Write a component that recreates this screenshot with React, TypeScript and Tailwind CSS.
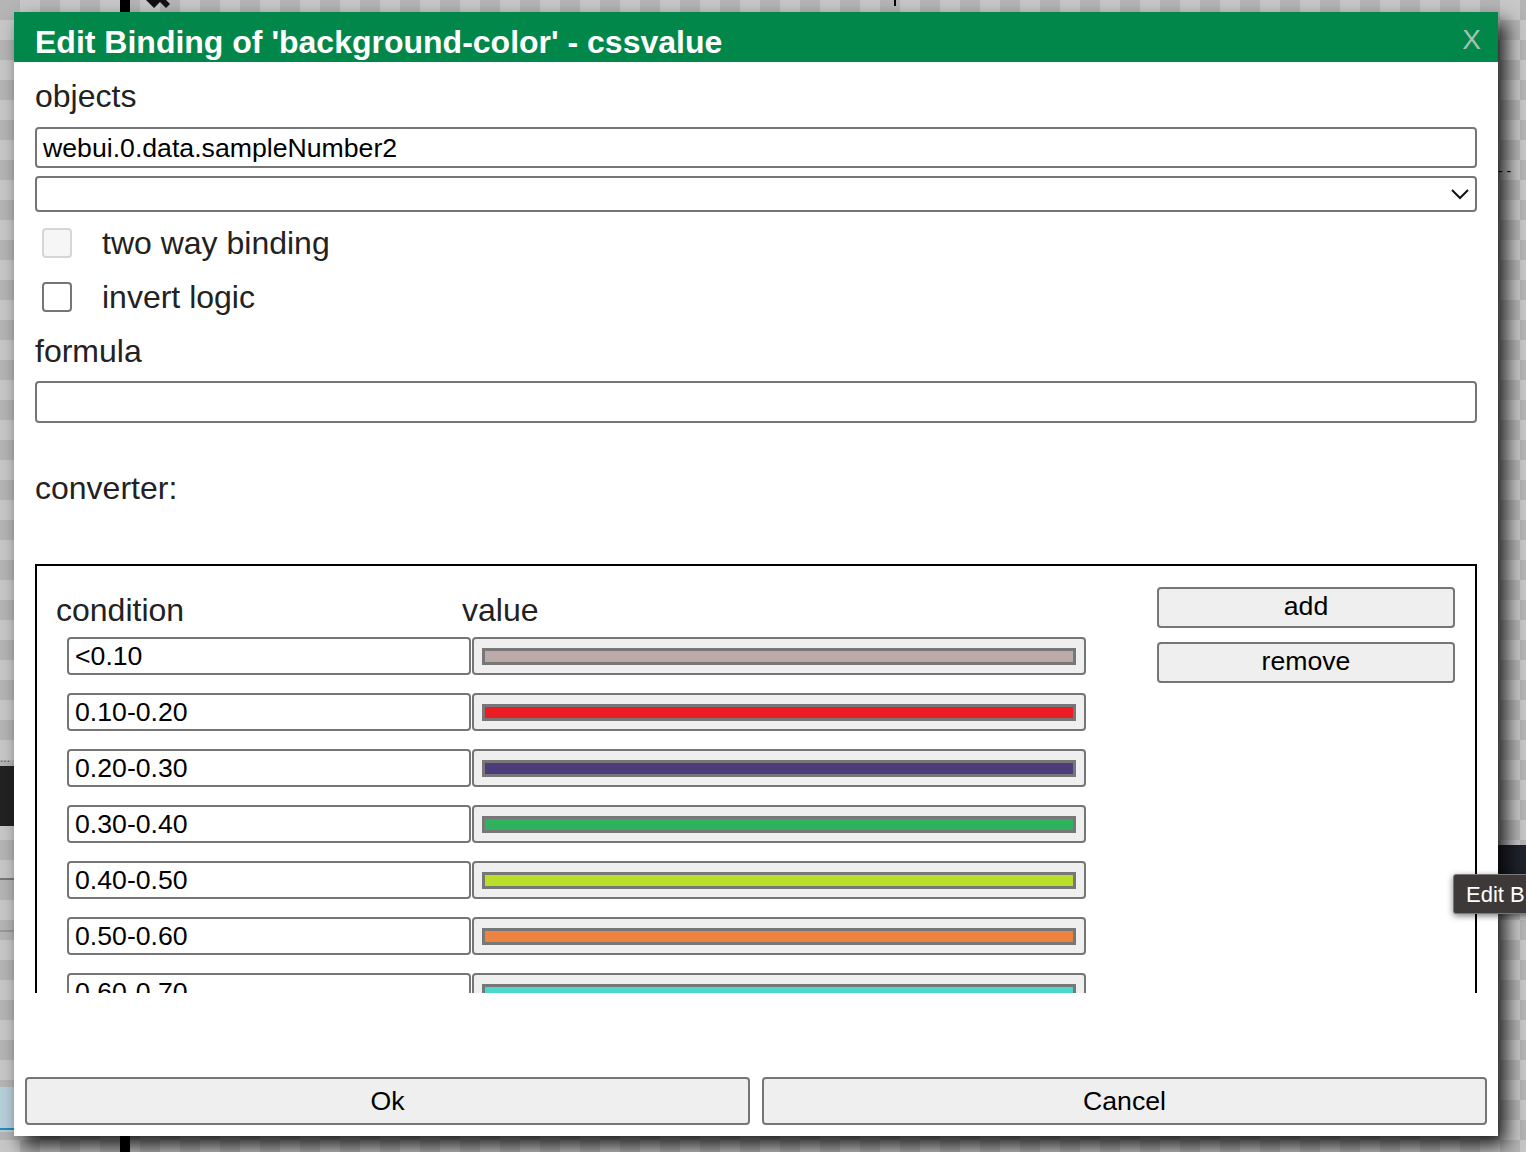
import React from 'react'

const rows = [
  { cond: '<0.10', color: 'bg-[#bcaaa8]' },
  { cond: '0.10-0.20', color: 'bg-[#ec1c24]' },
  { cond: '0.20-0.30', color: 'bg-[#4c3c7c]' },
  { cond: '0.30-0.40', color: 'bg-[#2fb25e]' },
  { cond: '0.40-0.50', color: 'bg-[#b9df2b]' },
  { cond: '0.50-0.60', color: 'bg-[#ee8240]' },
  { cond: '0.60-0.70', color: 'bg-[#4bd8cc]' },
]

function ConverterRow({ cond, color }: { cond: string; color: string }) {
  return (
    <div className="flex h-[38px] ml-[11px]">
      <div className="w-[404px] h-full border-2 border-[#767676] rounded-[4px] bg-white pl-[6px] flex items-center text-[26.67px] text-black">
        {cond}
      </div>
      <div className="w-[614px] h-full border-2 border-[#767676] rounded-[4px] bg-[#efefef] ml-[1px] px-[8px] flex items-center">
        <div className={`w-full h-[17px] border-[3px] border-[#777] ${color}`} />
      </div>
    </div>
  )
}

export default function App() {
  return (
    <div
      className="relative w-[1526px] h-[1152px] overflow-hidden bg-[repeating-conic-gradient(#c8c8c8_0_25%,#b5b5b5_0_50%)] bg-[length:40px_40px]"
      style={{ fontFamily: '"Liberation Sans", Arial, sans-serif' }}
    >
      {/* stuff from the app behind the dialog */}
      <div className="absolute left-[120px] top-0 w-[10px] h-[12px] bg-black" />
      <svg className="absolute left-[140px] top-0" width="40" height="12" viewBox="0 0 40 12">
        <path d="M6 0 L14 8 L20 2 L26 8 L30 4 L24 -2 Z" fill="#111" />
      </svg>
      <div className="absolute left-[894px] top-0 w-[2px] h-[6px] bg-black" />
      <div className="absolute left-0 top-[752px] w-[14px] text-[12px] leading-none text-[#555]">...</div>
      <div className="absolute left-0 top-[766px] w-[14px] h-[60px] bg-[#222]" />
      <div className="absolute left-0 top-[878px] w-[14px] h-[2px] bg-[#777]" />
      <div className="absolute left-0 top-[930px] w-[14px] h-[2px] bg-[#999]" />
      <div className="absolute left-0 top-[1087px] w-[14px] h-[45px] bg-[#b8d0dc]" />
      <div className="absolute left-0 top-[1128px] w-[130px] h-[2px] bg-[#2a8ab8]" />
      <div className="absolute left-[120px] top-[1130px] w-[10px] h-[22px] bg-black" />
      <div className="absolute left-[1498px] top-[845px] w-[28px] h-[60px] bg-[#1e222a]" />
      <div className="absolute left-[1498px] top-[164px] w-[28px] text-[14px] leading-none text-black">- -</div>

      {/* dialog */}
      <div className="absolute left-[14px] top-[12px] w-[1484px] h-[1124px] bg-white flex flex-col shadow-[8px_10px_18px_rgba(0,0,0,0.85)] text-[#222]">
        <div className="h-[50px] bg-[#02874a] flex items-center justify-between pl-[21px] pr-[17px] shrink-0">
          <span className="text-white font-bold text-[32px] leading-none pt-[10px]">Edit Binding of 'background-color' - cssvalue</span>
          <span className="text-[#a8bfb2] text-[28px] leading-none pt-[6px]">X</span>
        </div>

        <div className="flex flex-col px-[21px]">
          <div className="mt-[16px] h-[36px] text-[32px] leading-[36px]">objects</div>
          <div className="mt-[13px] h-[41px] border-2 border-[#767676] rounded-[4px] flex items-center pl-[6px] text-[26.67px] text-black">
            webui.0.data.sampleNumber2
          </div>
          <div className="mt-[8px] h-[36px] border-2 border-[#767676] rounded-[4px] flex items-center justify-end pr-[6px]">
            <svg width="18" height="12" viewBox="0 0 18 12" fill="none" stroke="#111" strokeWidth="2">
              <path d="M1 2 L9 10 L17 2" />
            </svg>
          </div>
          <div className="mt-[4px] h-[54px] flex items-center">
            <div className="ml-[7px] w-[30px] h-[30px] rounded-[4px] border-2 border-[#d6d6d6] bg-[#f6f6f6]" />
            <span className="ml-[30px] text-[32px]">two way binding</span>
          </div>
          <div className="h-[54px] flex items-center">
            <div className="ml-[7px] w-[30px] h-[30px] rounded-[4px] border-2 border-[#767676] bg-white" />
            <span className="ml-[30px] text-[32px]">invert logic</span>
          </div>
          <div className="mt-[9px] h-[36px] text-[32px] leading-[36px]">formula</div>
          <div className="mt-[12px] h-[42px] border-2 border-[#767676] rounded-[4px]" />
          <div className="mt-[47px] h-[36px] text-[32px] leading-[36px]">converter:</div>

          <div className="mt-[58px] h-[429px] overflow-hidden">
            <div className="border-2 border-black flex pt-[26px] pl-[19px] pr-[20px] pb-[40px]">
              <div className="flex flex-col flex-1">
                <div className="flex h-[36px] text-[32px] leading-[36px]">
                  <span className="w-[406px]">condition</span>
                  <span>value</span>
                </div>
                <div className="mt-[9px] flex flex-col gap-[18px]">
                  {rows.map((r) => (
                    <ConverterRow key={r.cond} cond={r.cond} color={r.color} />
                  ))}
                </div>
              </div>
              <div className="flex flex-col gap-[14px] w-[298px] -mt-[5px]">
                <button className="h-[41px] bg-[#efefef] border-2 border-[#767676] rounded-[4px] text-[26.67px] leading-none pb-[3px] text-black">add</button>
                <button className="h-[41px] bg-[#efefef] border-2 border-[#767676] rounded-[4px] text-[26.67px] leading-none pb-[3px] text-black">remove</button>
              </div>
            </div>
          </div>
        </div>

        <div className="mt-auto flex gap-[12px] px-[11px] pb-[11px]">
          <button className="flex-1 h-[48px] bg-[#efefef] border-2 border-[#767676] rounded-[4px] text-[26.67px] text-black">Ok</button>
          <button className="flex-1 h-[48px] bg-[#efefef] border-2 border-[#767676] rounded-[4px] text-[26.67px] text-black">Cancel</button>
        </div>
      </div>

      {/* tooltip over the dialog edge */}
      <div className="absolute left-[1453px] top-[874px] h-[40px] w-[110px] pl-[12px] bg-[#3d3939] border border-[#7a7a7a] rounded-l-[3px] flex items-center whitespace-nowrap text-white text-[22px] shadow-[0_2px_6px_rgba(0,0,0,0.5)]">
        Edit B
      </div>
    </div>
  )
}
